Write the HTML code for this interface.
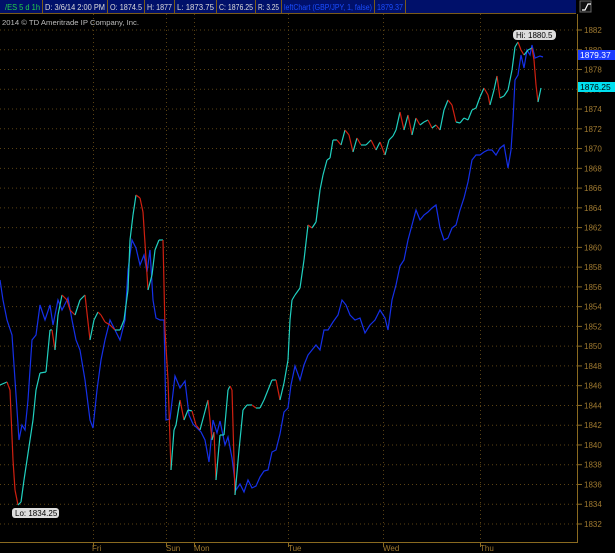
<!DOCTYPE html>
<html><head><meta charset="utf-8"><style>
html,body{margin:0;padding:0;background:#000;width:615px;height:553px;overflow:hidden;font-family:"Liberation Sans",sans-serif}
</style></head><body>
<svg id="s" width="615" height="553" xmlns="http://www.w3.org/2000/svg" style="position:absolute;left:0;top:0;font-family:'Liberation Sans',sans-serif">
<rect width="615" height="553" fill="#000"/>
<rect x="0" y="0" width="576" height="14" fill="#00106a"/>
<g stroke="#7a5a1a" stroke-width="1">
<line x1="0" y1="13.5" x2="576" y2="13.5"/>
<line x1="42.5" y1="0" x2="42.5" y2="14"/><line x1="107.5" y1="0" x2="107.5" y2="14"/>
<line x1="144.5" y1="0" x2="144.5" y2="14"/><line x1="174.5" y1="0" x2="174.5" y2="14"/>
<line x1="216.5" y1="0" x2="216.5" y2="14"/><line x1="255.5" y1="0" x2="255.5" y2="14"/>
<line x1="281.5" y1="0" x2="281.5" y2="14"/><line x1="374.5" y1="0" x2="374.5" y2="14"/>
<line x1="405.5" y1="0" x2="405.5" y2="14"/>
</g>
<g font-size="8" fill="#ddd" lengthAdjust="spacingAndGlyphs">
<text x="5" y="10" fill="#22d04a" textLength="35" lengthAdjust="spacingAndGlyphs">/ES 5 d 1h</text>
<text x="45" y="10" textLength="60" lengthAdjust="spacingAndGlyphs">D: 3/6/14 2:00 PM</text>
<text x="110" y="10" textLength="32" lengthAdjust="spacingAndGlyphs">O: 1874.5</text>
<text x="147" y="10" textLength="25" lengthAdjust="spacingAndGlyphs">H: 1877</text>
<text x="177" y="10" textLength="37" lengthAdjust="spacingAndGlyphs">L: 1873.75</text>
<text x="219" y="10" textLength="34" lengthAdjust="spacingAndGlyphs">C: 1876.25</text>
<text x="258" y="10" textLength="21" lengthAdjust="spacingAndGlyphs">R: 3.25</text>
<text x="284" y="10" fill="#1a4dff" textLength="88" lengthAdjust="spacingAndGlyphs">leftChart (GBP/JPY, 1, false)</text>
<text x="377" y="10" fill="#1a4dff" textLength="26" lengthAdjust="spacingAndGlyphs">1879.37</text>
<text x="2" y="25" fill="#bbb" font-size="7.5" textLength="137" lengthAdjust="spacingAndGlyphs">2014 © TD Ameritrade IP Company, Inc.</text>
</g>
<rect x="580" y="1" width="11" height="11" fill="#111" stroke="#666"/>
<path d="M582 10 h3 l3 -6 h3" stroke="#fff" fill="none" stroke-width="1.2"/>
<g id="grid" stroke="#5a4214" stroke-width="1" stroke-dasharray="1,3"></g>
<line x1="577.5" y1="14" x2="577.5" y2="543" stroke="#8a6a20"/>
<line x1="0" y1="542.5" x2="578" y2="542.5" stroke="#8a6a20"/>
<g id="lbl" font-size="8" fill="#a07a30"></g>
<g font-size="8" fill="#a07a30">
<text x="92" y="551">Fri</text><text x="166" y="551">Sun</text><text x="194" y="551">Mon</text>
<text x="288" y="551">Tue</text><text x="383" y="551">Wed</text><text x="480" y="551">Thu</text>
</g>
<g id="lines" fill="none" stroke-width="1.2"></g>
<rect x="578" y="50" width="37" height="10" fill="#1a3cff"/>
<text x="580" y="58" font-size="8.5" fill="#fff">1879.37</text>
<rect x="578" y="82" width="37" height="10" fill="#00e0f0"/>
<text x="580" y="90" font-size="8.5" fill="#000">1876.25</text>
<rect x="513" y="30" width="43" height="10" rx="4" fill="#ddd"/>
<text x="516" y="38" font-size="8" fill="#000">Hi: 1880.5</text>
<rect x="12" y="508" width="47" height="10" rx="3" fill="#ddd"/>
<text x="15" y="516" font-size="8" fill="#000">Lo: 1834.25</text>
</svg>
<script>
var N="http://www.w3.org/2000/svg";
var g=document.getElementById('grid'),l=document.getElementById('lbl'),L=document.getElementById('lines');
function el(t,a,p){var e=document.createElementNS(N,t);for(var k in a)e.setAttribute(k,a[k]);p.appendChild(e);return e;}
for(var v=1882;v>=1832;v-=2){var y=30+(1882-v)*9.88;el('line',{x1:0,y1:y,x2:577,y2:y},g);
 el('line',{x1:577,y1:y,x2:582,y2:y,stroke:'#8a6a20'},l);var t=el('text',{x:584,y:y+3},l);t.textContent=v;}
[93,166,194,288,383,480].forEach(function(x){el('line',{x1:x+.5,y1:14,x2:x+.5,y2:542},g);el('line',{x1:x+.5,y1:542,x2:x+.5,y2:547,stroke:'#8a6a20'},L.parentNode);});
var blue=[0,280,3,300,7,320,12,335,15,380,19,440,22,425,25,430,28,400,32,340,36,335,40,305,45,320,50,305,53,325,58,300,62,310,68,298,72,320,76,340,80,350,85,380,90,420,93,428,97,390,101,360,105,340,110,320,115,330,120,340,125,320,128,270,132,240,136,248,140,265,144,255,147,272,150,250,153,300,156,318,160,320,164,320,166,420,170,419,175,376,180,388,185,381,189,415,193,424,197,428,201,432,205,440,209,462,213,420,217,433,220,421,225,445,228,437,232,458,236,490,240,484,244,492,248,480,252,488,256,486,260,477,264,471,268,470,272,452,276,450,280,434,284,412,288,408,291,385,295,366,300,380,304,365,308,355,312,350,316,345,320,350,324,330,328,330,333,322,338,315,342,300,346,305,350,315,355,320,360,318,365,333,370,325,375,320,380,310,385,318,388,330,392,300,396,285,400,266,404,260,408,240,412,225,416,210,420,220,424,215,428,212,432,208,436,205,440,228,444,240,448,238,452,228,456,225,460,210,464,198,468,182,472,160,476,155,480,155,484,152,488,150,492,150,496,155,500,148,504,145,508,168,511,150,513,120,515,80,518,75,521,55,524,68,527,50,530,55,532,45,535,58,540,56,543,57];
var es=[0,385,7,382,10,390,13,460,15,490,18,505,21,502,24,480,27,460,30,440,33,420,36,390,40,373,46,372,50,330,52,330,55,350,58,315,62,295,67,300,70,310,75,315,80,300,85,295,90,340,94,320,98,312,101,315,105,322,110,325,115,330,120,330,124,320,128,290,130,240,133,215,136,195,140,198,143,212,148,290,152,275,155,250,159,240,163,240,165,330,168,380,171,470,174,430,176,425,180,400,184,420,188,410,192,411,196,425,200,430,204,415,208,400,212,440,214,432,216,480,220,435,224,435,228,390,230,386,232,390,235,495,239,450,243,410,247,405,252,405,256,408,260,408,264,400,268,390,272,380,276,380,280,400,284,383,288,360,290,320,292,300,295,295,300,288,304,260,308,225,312,228,316,222,320,190,323,175,327,160,330,158,333,140,337,140,341,145,345,130,349,135,353,152,357,138,361,145,366,145,371,140,376,150,380,142,385,155,389,140,393,136,396,130,400,112,404,130,408,115,412,135,416,118,420,125,424,122,428,120,432,128,436,125,440,130,444,110,448,100,452,105,456,122,460,123,464,118,468,120,472,110,476,108,480,97,484,88,488,95,490,105,494,90,497,76,500,98,504,96,508,90,512,70,515,47,518,42,521,50,524,55,528,50,532,48,534,60,536,85,538,102,541,88];
var p='';for(var i=0;i<blue.length;i+=2)p+=(i?' ':'')+blue[i]+','+blue[i+1];
el('polyline',{points:p,stroke:'#1530e8'},L);
for(var i=0;i+3<es.length;i+=2){el('line',{x1:es[i],y1:es[i+1],x2:es[i+2],y2:es[i+3],stroke:es[i+3]>es[i+1]+2?'#d02010':'#20d0c0','stroke-width':1.2},L);}
</script>
</body></html>
